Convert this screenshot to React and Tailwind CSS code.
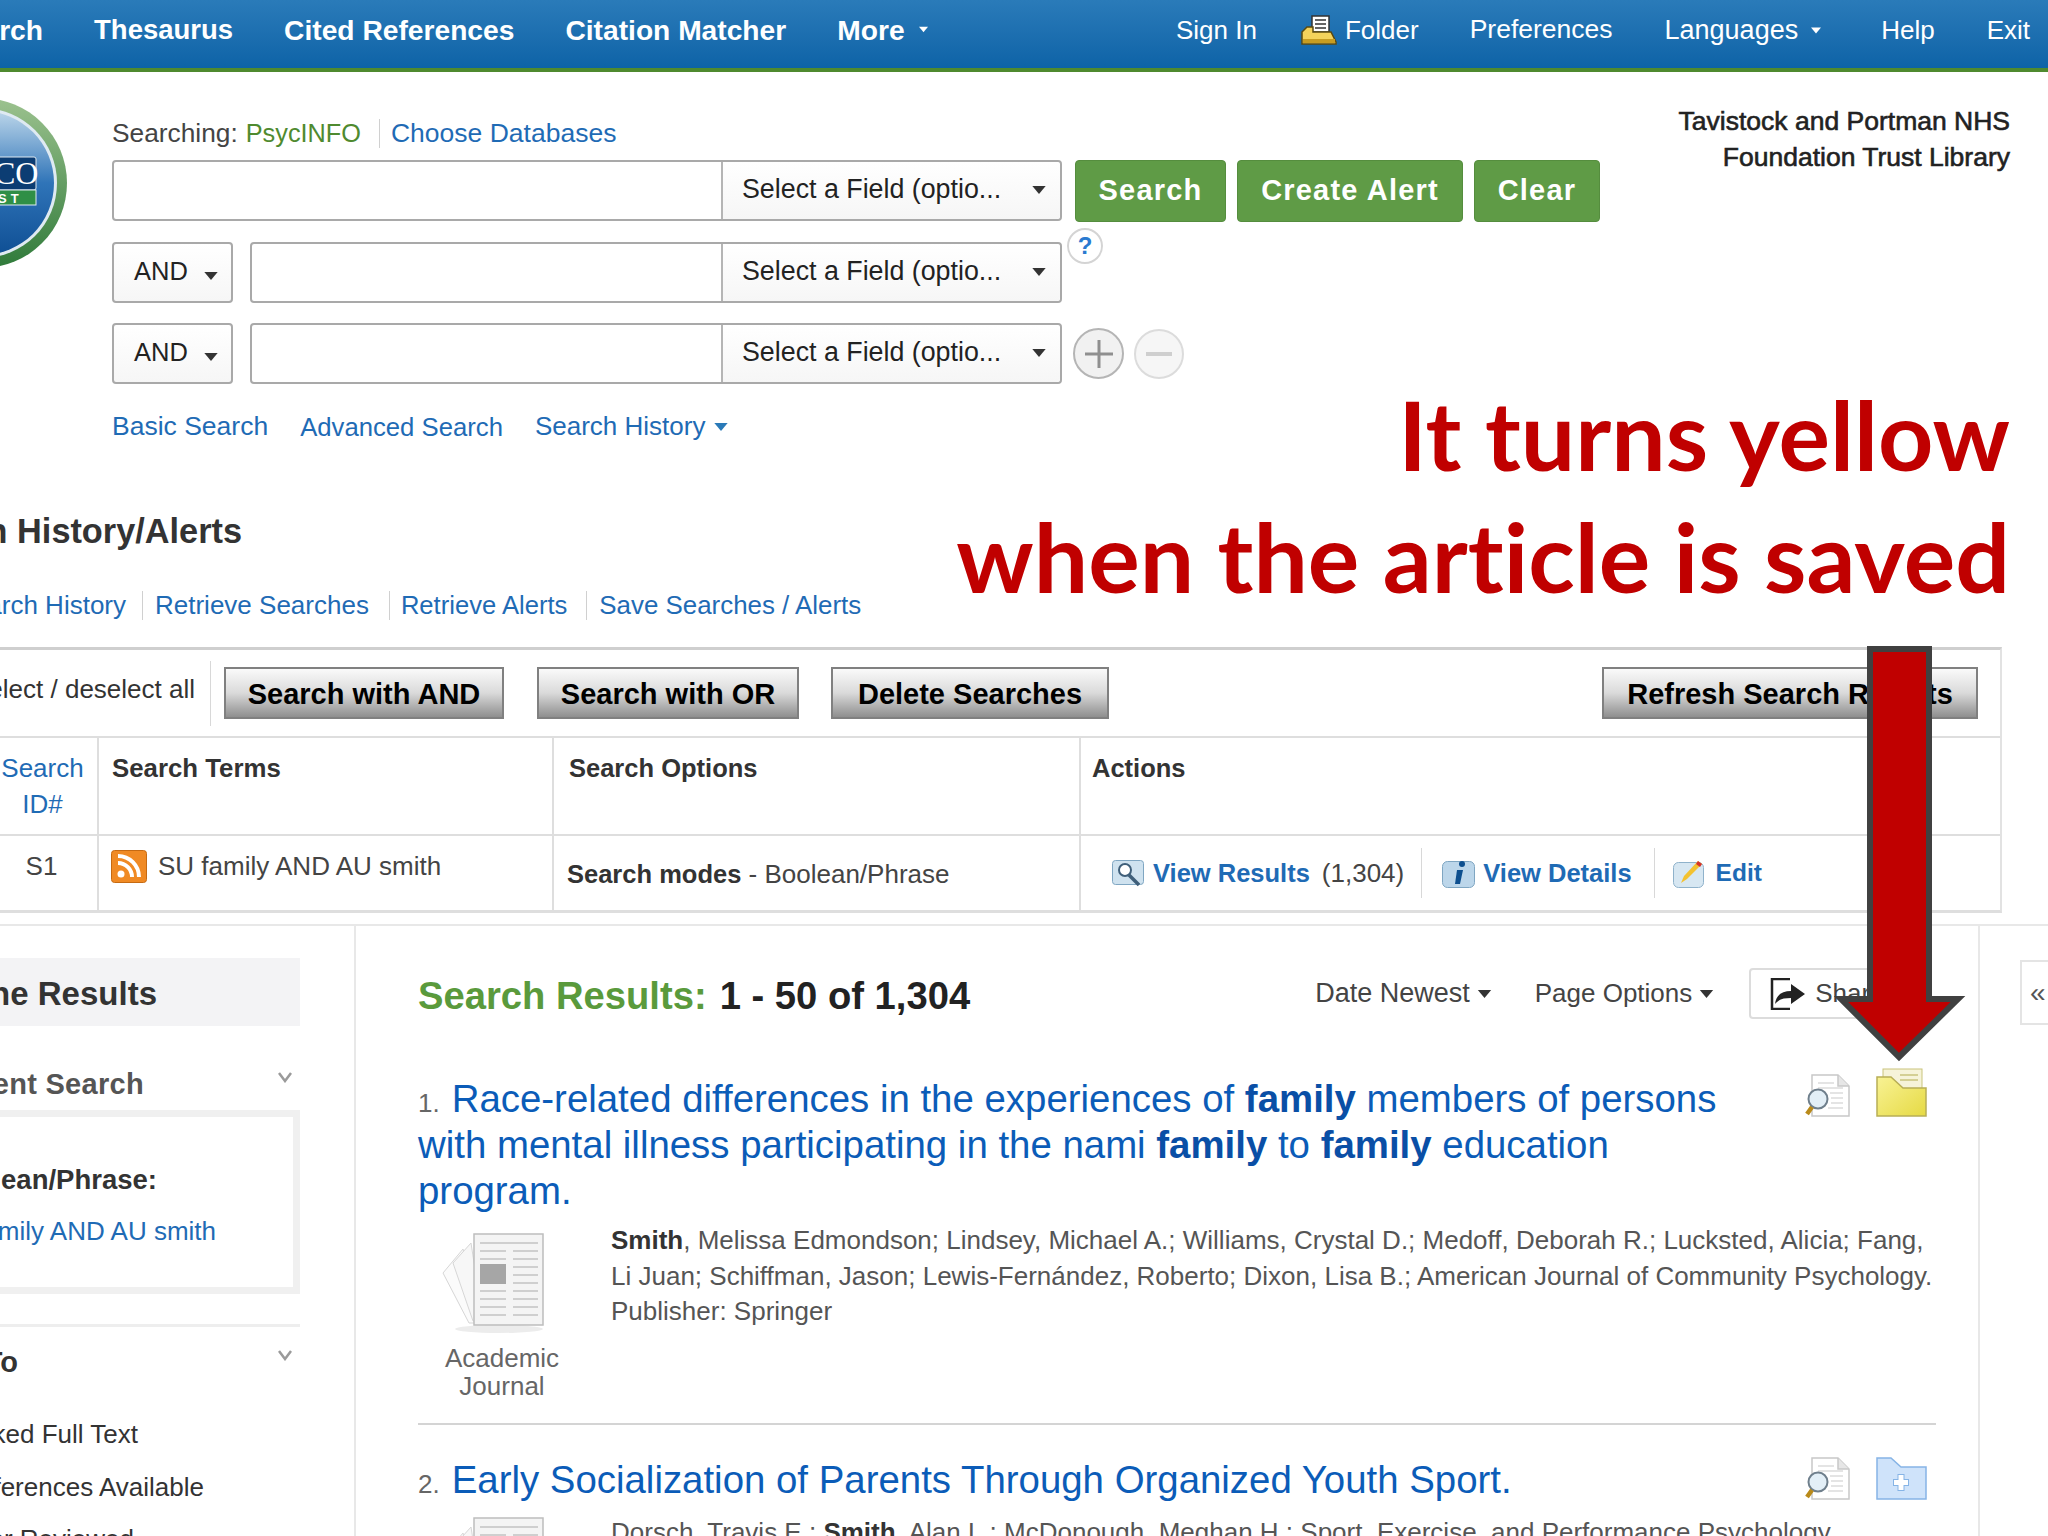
const leftNav = [
  { label: 'Thesaurus', size: 'text-[27.5px]' },
  { label: 'Cited References', size: '' },
  { label: 'Citation Matcher', size: '' },
]

function Caret({ className, color = '#333' }) {
  return (
    <svg className={className} viewBox="0 0 10 6">
      <path d="M0 0h10L5 6z" fill={color} />
    </svg>
  )
}

function Logo() {
  return (
    <svg width="67" height="170" viewBox="0 0 67 170" className="shrink-0">
      <defs>
        <linearGradient id="ring" x1="0" y1="0" x2="0" y2="1">
          <stop offset="0" stopColor="#9cc28f" />
          <stop offset="1" stopColor="#2f7a3a" />
        </linearGradient>
        <linearGradient id="globe" x1="0" y1="0" x2="0" y2="1">
          <stop offset="0" stopColor="#bcd6ea" />
          <stop offset="0.5" stopColor="#2f74b8" />
          <stop offset="1" stopColor="#0f4f94" />
        </linearGradient>
      </defs>
      <circle cx="-18" cy="85" r="85" fill="url(#ring)" />
      <circle cx="-18" cy="85" r="75" fill="#dfeaf2" />
      <circle cx="-18" cy="85" r="72" fill="url(#globe)" />
      <rect x="-20" y="59" width="56" height="33" rx="2" fill="#0c3d73" stroke="#dfeaf2" />
      <text x="-6" y="86" fontSize="32" fill="#fff" fontFamily="Liberation Serif, serif">CO</text>
      <rect x="-20" y="92" width="56" height="15" fill="#2f8f46" stroke="#dfeaf2" />
      <text x="-2" y="105" fontSize="13" fontWeight="700" fill="#fff" letterSpacing="4" fontFamily="Liberation Sans, sans-serif">ST</text>
    </svg>
  )
}

function FolderNavIcon() {
  return (
    <svg width="36" height="30" viewBox="0 0 36 30" className="shrink-0">
      <rect x="11" y="1" width="17" height="16" fill="#fff" stroke="#333" strokeWidth="1.5" />
      <path d="M14 5h11M14 9h11M14 13h11" stroke="#333" strokeWidth="1.5" />
      <path d="M1 17l5-5h6v5h18l5 10v2H1z" fill="#f4d35c" stroke="#5a4a10" strokeWidth="1.5" />
      <path d="M2 24h32v4H2z" fill="#c79d22" />
    </svg>
  )
}

function RssIcon() {
  return (
    <svg width="36" height="34" viewBox="0 0 36 34" className="shrink-0">
      <rect x="0.5" y="0.5" width="35" height="32" rx="3" fill="#f08a24" stroke="#c66a12" />
      <circle cx="10" cy="24" r="3.5" fill="#fff" />
      <path d="M7 13a14 14 0 0 1 14 14M7 6a21 21 0 0 1 21 21" fill="none" stroke="#fff" strokeWidth="4" />
    </svg>
  )
}

function ResultsIcon() {
  return (
    <svg width="32" height="27" viewBox="0 0 32 27" className="shrink-0">
      <rect x="0.5" y="0.5" width="31" height="24" rx="3" fill="#cfe2ef" stroke="#7fa6c2" />
      <circle cx="13" cy="10" r="6" fill="#fff" stroke="#3f5f7a" strokeWidth="2" />
      <path d="M17 15l10 10" stroke="#3f5f7a" strokeWidth="3.5" />
    </svg>
  )
}

function InfoIcon() {
  return (
    <svg width="33" height="29" viewBox="0 0 33 29" className="shrink-0">
      <rect x="0.5" y="2.5" width="32" height="26" rx="5" fill="#bcd6ea" stroke="#7fa6c2" />
      <path d="M15 11h6l-3 14h-5z" fill="#0d4f8f" />
      <circle cx="20" cy="5" r="3" fill="#0d4f8f" />
    </svg>
  )
}

function EditIcon() {
  return (
    <svg width="33" height="29" viewBox="0 0 33 29" className="shrink-0">
      <rect x="0.5" y="3.5" width="30" height="25" rx="5" fill="#d7e7f2" stroke="#8fb2cb" />
      <path d="M8 24l3-7L25 2l4 3-15 15z" fill="#f3c230" />
      <path d="M25 2l4 3-2 3-4-3z" fill="#d6322c" />
    </svg>
  )
}

function PreviewIcon() {
  return (
    <svg width="46" height="43" viewBox="0 0 46 43" className="shrink-0">
      <path d="M8 1h26l11 11v30H8z" fill="#fff" stroke="#c8c8c8" strokeWidth="1.5" />
      <path d="M34 1v11h11" fill="#e6e6e6" stroke="#c8c8c8" strokeWidth="1.5" />
      <path d="M14 9h16M14 14h25M26 19h13M27 24h12M27 29h12M24 34h15" stroke="#dcdcdc" strokeWidth="1.5" />
      <circle cx="14" cy="25" r="9.500" fill="#e3eff7" stroke="#6f7f8c" strokeWidth="2" />
      <path d="M8 33l-5 7" stroke="#b98a1a" strokeWidth="4.500" />
    </svg>
  )
}

function SavedFolderIcon() {
  return (
    <svg width="51" height="49" viewBox="0 0 51 49" className="shrink-0">
      <defs>
        <linearGradient id="savedFolder" x1="0" y1="0" x2="1" y2="1">
          <stop offset="0" stopColor="#f8f294" />
          <stop offset="1" stopColor="#e6da44" />
        </linearGradient>
      </defs>
      <rect x="7" y="1" width="39" height="30" fill="#f6f3d9" stroke="#c9c47d" />
      <path d="M24 7h18M24 12h18" stroke="#c9c47d" strokeWidth="1.5" />
      <path d="M1 9h14l12 11h23v28H1z" fill="url(#savedFolder)" stroke="#b8ae55" strokeWidth="1.5" />
    </svg>
  )
}

function AddFolderIcon() {
  return (
    <svg width="51" height="43" viewBox="0 0 51 43" className="shrink-0">
      <path d="M1 1h14l10 9h25v32H1z" fill="#cfe3fa" stroke="#86b4e6" strokeWidth="1.5" />
      <path d="M25 17v17M17 25.500h16" stroke="#86b4e6" strokeWidth="7" />
      <path d="M25 18v15M18 25.500h14" stroke="#fff" strokeWidth="5" />
    </svg>
  )
}

function JournalIcon() {
  return (
    <svg width="104" height="105" viewBox="0 0 104 105" className="shrink-0">
      <ellipse cx="58" cy="96" rx="44" ry="4" fill="#ececec" />
      <path d="M22 16L2 40l26 50h12z" fill="#fbfbfb" stroke="#d6d6d6" />
      <path d="M30 10L12 30l20 58h10z" fill="#f7f7f7" stroke="#d6d6d6" />
      <rect x="33" y="1" width="69" height="91" fill="#f4f4f4" stroke="#bdbdbd" strokeWidth="1.5" />
      <path d="M39 10h58M39 18h26M39 26h26M72 18h25M72 26h25M72 34h25M72 42h25M72 50h25M72 58h25M72 66h25M72 74h25M72 82h25M39 58h26M39 66h26M39 74h26M39 82h26" stroke="#cfcfcf" strokeWidth="2" />
      <rect x="39" y="31" width="26" height="20" fill="#a6a6a6" />
    </svg>
  )
}

function ShareIcon() {
  return (
    <svg width="36" height="32" viewBox="0 0 36 32" className="shrink-0">
      <path d="M20 1H2v30h18" fill="none" stroke="#222" strokeWidth="2.500" />
      <path d="M5 26c1-9 7-13 16-13V6l14 10-14 10v-6c-7 0-12 1-16 6z" fill="#222" />
    </svg>
  )
}

function Clipped({ width, className, children }) {
  return (
    <div className={`flex justify-end whitespace-nowrap ${width} ${className || ''}`}>
      <span className="shrink-0">{children}</span>
    </div>
  )
}

function Header() {
  return (
    <div className="h-[72px] shrink-0 flex items-center justify-between border-b-4 border-[#4f8a2f] bg-gradient-to-b from-[#2a7bb9] to-[#0d63a7] text-white pb-[8px]">
      <div className="flex items-center gap-[51px] font-bold text-[28.2px] whitespace-nowrap">
        <span className="ml-[-51px]">Search</span>
        {leftNav.map((item) => (
          <span key={item.label} className={item.size}>{item.label}</span>
        ))}
        <span className="flex items-center gap-[14px]">
          More
          <Caret className="w-[9px] h-[7px]" color="#fff" />
        </span>
      </div>
      <div className="flex items-center text-[26px] whitespace-nowrap pr-[18px]">
        <span>Sign In</span>
        <span className="flex items-center gap-[8px] ml-[44px]">
          <FolderNavIcon />
          Folder
        </span>
        <span className="ml-[51px] text-[26.5px]">Preferences</span>
        <span className="flex items-center gap-[13px] ml-[52px] text-[27px]">
          Languages
          <Caret className="w-[10px] h-[7px]" color="#fff" />
        </span>
        <span className="ml-[60px]">Help</span>
        <span className="ml-[52px]">Exit</span>
      </div>
    </div>
  )
}

function FieldBox({ className }) {
  return (
    <div className={`h-[61px] flex border-2 border-[#a9a9a9] rounded-[4px] bg-white ${className}`}>
      <div className="flex-1" />
      <div className="w-[339px] shrink-0 flex items-center border-l-2 border-[#b5b5b5] pl-[19px] pr-[13px] pb-[2px] bg-gradient-to-b from-white to-[#f6f6f6] rounded-r-[4px]">
        <span className="flex-1 text-[26.8px] text-[#222] whitespace-nowrap">Select a Field (optio...</span>
        <Caret className="w-[16px] h-[8px]" />
      </div>
    </div>
  )
}

function BoolSelect() {
  return (
    <div className="w-[121px] h-[61px] shrink-0 flex items-center border-2 border-[#a9a9a9] rounded-[4px] bg-gradient-to-b from-white to-[#f6f6f6] pl-[20px] pb-[3px] text-[25.5px] text-[#222]">
      AND
      <Caret className="w-[16px] h-[8px] ml-[15px] mt-[9px]" />
    </div>
  )
}

function SearchButton({ width, children }) {
  return (
    <button className={`${width} h-[62px] shrink-0 rounded-[4px] bg-[#5f9b46] border border-[#558d3e] text-white font-bold text-[29px] tracking-[1.2px]`}>
      {children}
    </button>
  )
}

function SearchForm() {
  return (
    <div className="flex h-[442px] shrink-0">
      <div className="mt-[26px]">
        <Logo />
      </div>
      <div className="ml-[45px] w-[1490px] shrink-0">
        <div className="mt-[47px] h-[29px] flex items-center text-[26px] whitespace-nowrap">
          <span className="text-[#444] text-[26.3px]">Searching:</span>
          <span className="ml-[8px] text-[#4f8a2f] text-[25.3px]">PsycINFO</span>
          <span className="ml-[18px] w-px h-[29px] bg-[#d0d0d0]" />
          <span className="ml-[11px] text-[#1f6bb5] text-[26.5px]">Choose Databases</span>
        </div>
        <div className="mt-[12px] flex flex-col gap-[20px]">
          <div className="flex items-start">
            <FieldBox className="w-[950px]" />
            <div className="flex gap-[11px] ml-[13px]">
              <SearchButton width="w-[151px]">Search</SearchButton>
              <SearchButton width="w-[226px]">Create Alert</SearchButton>
              <SearchButton width="w-[126px]">Clear</SearchButton>
            </div>
          </div>
          <div className="flex items-start">
            <BoolSelect />
            <FieldBox className="w-[812px] ml-[17px]" />
            <div className="w-[36px] h-[36px] ml-[5px] mt-[-14px] rounded-full border-2 border-[#d4d4d4] bg-white flex items-center justify-center text-[#2a7ad0] font-bold text-[24px]">
              ?
            </div>
          </div>
          <div className="flex items-center">
            <BoolSelect />
            <FieldBox className="w-[812px] ml-[17px]" />
            <div className="w-[51px] h-[51px] ml-[11px] rounded-full border-2 border-[#b5b5b5] bg-[#f1f1f1] flex items-center justify-center">
              <svg width="28" height="28" viewBox="0 0 28 28">
                <path d="M14 0v28M0 14h28" stroke="#8f8f8f" strokeWidth="3" />
              </svg>
            </div>
            <div className="w-[50px] h-[50px] ml-[10px] rounded-full border-2 border-[#dcdcdc] bg-[#f6f6f6] flex items-center justify-center">
              <svg width="26" height="4" viewBox="0 0 26 4">
                <path d="M0 2h26" stroke="#cfcfcf" strokeWidth="4" />
              </svg>
            </div>
          </div>
        </div>
        <div className="mt-[23px] flex items-center text-[26px] text-[#1f6bb5] whitespace-nowrap">
          <span className="text-[26.5px]">Basic Search</span>
          <span className="ml-[32px] text-[25.7px]">Advanced Search</span>
          <span className="ml-[32px]">Search History</span>
          <Caret className="w-[16px] h-[8px] ml-[8px]" color="#2a7ab8" />
        </div>
      </div>
      <div className="flex-1 mt-[31px] text-right pr-[38px] text-[26.500px] leading-[36px] text-[#222] whitespace-nowrap [-webkit-text-stroke:0.6px_#222]">
        <div>Tavistock and Portman NHS</div>
        <div>Foundation Trust Library</div>
      </div>
    </div>
  )
}

function ToolButton({ width, children }) {
  return (
    <button className={`${width} h-[52px] shrink-0 pt-[3px] border-2 border-[#808080] bg-gradient-to-b from-[#fafafa] via-[#dadada] to-[#8f8f8f] text-black font-bold text-[29px] whitespace-nowrap`}>
      {children}
    </button>
  )
}

function HistoryPanel() {
  return (
    <div>
      <Clipped width="w-[242px]" className="h-[40px] items-center font-bold text-[34.3px] text-[#333] -mt-[2px]">
        Search History/Alerts
      </Clipped>
      <div className="mt-[39px] h-[29px] flex items-center text-[26px] text-[#1f6bb5] whitespace-nowrap">
        <Clipped width="w-[126px]">Print Search History</Clipped>
        <span className="ml-[16px] w-px h-[29px] bg-[#d0d0d0]" />
        <span className="ml-[12px]">Retrieve Searches</span>
        <span className="ml-[20px] w-px h-[29px] bg-[#d0d0d0]" />
        <span className="ml-[11px] text-[25.6px]">Retrieve Alerts</span>
        <span className="ml-[19px] w-px h-[29px] bg-[#d0d0d0]" />
        <span className="ml-[12px] text-[25.9px]">Save Searches / Alerts</span>
      </div>
      <div className="mt-[27px] w-[2002px] border-t-[3px] border-r-2 border-b-[3px] border-t-[#cfcfcf] border-r-[#e2e2e2] border-b-[#dedede]">
        <div className="h-[88px] flex items-center border-b-2 border-[#dedede]">
          <Clipped width="w-[195px]" className="text-[26px] text-[#333] -mt-[7px]">Select / deselect all</Clipped>
          <div className="ml-[15px] w-px h-[65px] bg-[#d8d8d8]" />
          <div className="ml-[13px] flex items-center">
            <ToolButton width="w-[280px]">Search with AND</ToolButton>
            <div className="ml-[33px]">
              <ToolButton width="w-[262px]">Search with OR</ToolButton>
            </div>
            <div className="ml-[32px]">
              <ToolButton width="w-[278px]">Delete Searches</ToolButton>
            </div>
          </div>
          <div className="ml-auto mr-[22px]">
            <ToolButton width="w-[376px]">Refresh Search Results</ToolButton>
          </div>
        </div>
        <div className="grid grid-cols-[99px_455px_527px_1fr] h-[98px] border-b-2 border-[#dedede] text-[25.8px] leading-[36px] font-bold text-[#333]">
          <div className="border-r-2 border-[#dedede] pt-[12px] pr-[12px] text-center font-normal text-[#1f6bb5] text-[26px]">
            Search
            <br />
            ID#
          </div>
          <div className="border-r-2 border-[#dedede] pt-[12px] pl-[13px]">Search Terms</div>
          <div className="border-r-2 border-[#dedede] pt-[12px] pl-[15px] text-[25.500px]">Search Options</div>
          <div className="pt-[12px] pl-[11px] text-[25.500px]">Actions</div>
        </div>
        <div className="grid grid-cols-[99px_455px_527px_1fr] h-[74px] text-[26px] text-[#444]">
          <div className="border-r-2 border-[#dedede] pt-[12px] pr-[14px] text-center leading-[36px]">S1</div>
          <div className="border-r-2 border-[#dedede] pt-[14px] pl-[12px] flex items-start leading-[32px]">
            <RssIcon />
            <span className="ml-[11px]">SU family AND AU smith</span>
          </div>
          <div className="border-r-2 border-[#dedede] pl-[13px] pt-[20px] leading-[36px] whitespace-nowrap">
            <span className="font-bold text-[25.500px] text-[#333]">Search modes</span> - Boolean/Phrase
          </div>
          <div className="flex items-center pl-[31px] whitespace-nowrap">
            <ResultsIcon />
            <span className="ml-[9px] font-bold text-[25.500px] text-[#1f6bb5]">View Results</span>
            <span className="ml-[12px]">(1,304)</span>
            <span className="ml-[17px] w-px h-[50px] bg-[#d8d8d8]" />
            <span className="ml-[20px]"><InfoIcon /></span>
            <span className="ml-[8px] font-bold text-[25.500px] text-[#1f6bb5]">View Details</span>
            <span className="ml-[22px] w-px h-[50px] bg-[#d8d8d8]" />
            <span className="ml-[18px]"><EditIcon /></span>
            <span className="ml-[10px] font-bold text-[24.500px] text-[#1f6bb5]">Edit</span>
          </div>
        </div>
      </div>
    </div>
  )
}

function Chevron() {
  return (
    <svg width="14" height="11" viewBox="0 0 14 11">
      <path d="M1 1l6 8 6-8" fill="none" stroke="#9a9a9a" strokeWidth="2.500" />
    </svg>
  )
}

function Sidebar() {
  return (
    <div className="w-[356px] shrink-0 border-r-2 border-[#e8e8e8]">
      <div className="w-[300px] mt-[32px] h-[68px] bg-[#f3f3f5] flex items-center pt-[3px]">
        <Clipped width="w-[157px]" className="font-bold text-[33px] text-[#333]">Refine Results</Clipped>
      </div>
      <div className="w-[300px] mt-[45px] h-[28px] flex items-center justify-between pr-[8px]">
        <Clipped width="w-[144px]" className="font-bold text-[29px] text-[#555] tracking-[0.3px]">Current Search</Clipped>
        <span className="-mt-[16px]"><Chevron /></span>
      </div>
      <div className="w-[300px] mt-[11px] h-[184px] border-[7px] border-l-0 border-[#f0f0f0]">
        <Clipped width="w-[157px]" className="mt-[42px] font-bold text-[27.5px] text-[#333]">Boolean/Phrase:</Clipped>
        <Clipped width="w-[216px]" className="mt-[12px] text-[26px] text-[#1f6bb5]">SU family AND AU smith</Clipped>
      </div>
      <div className="w-[300px] mt-[30px] h-[3px] bg-[#eeeeee]" />
      <div className="w-[300px] mt-[22px] h-[28px] flex items-center justify-between pr-[8px]">
        <Clipped width="w-[18px]" className="font-bold text-[29px] text-[#333]">Limit To</Clipped>
        <span className="-mt-[16px]"><Chevron /></span>
      </div>
      <Clipped width="w-[138px]" className="mt-[42px] text-[26px] leading-[30px] text-[#333]">Linked Full Text</Clipped>
      <Clipped width="w-[204px]" className="mt-[23px] text-[26px] leading-[30px] text-[#333]">References Available</Clipped>
      <Clipped width="w-[134px]" className="mt-[22px] text-[26px] leading-[30px] text-[#333]">Peer Reviewed</Clipped>
    </div>
  )
}

function ResultItem({ top, lines, folder, children }) {
  return (
    <div>
      <div className="flex items-start">
        <div className={`w-[1386px] shrink-0 ${top} text-[38.4px] leading-[46px] text-[#0b5cb8] whitespace-nowrap`}>
          {lines}
        </div>
        <div className="flex items-end gap-[26px]">
          <PreviewIcon />
          {folder}
        </div>
      </div>
      {children}
    </div>
  )
}

function Bold({ children }) {
  return <b className="font-bold text-[#0a4fa6]">{children}</b>
}

function ItemNumber({ children }) {
  return <span className="text-[26px] leading-none text-[#666] mr-[12px]">{children}</span>
}

function Results() {
  return (
    <div className="w-[1624px] shrink-0 border-r-2 border-[#e8e8e8] pl-[62px]">
      <div className="mt-[42px] h-[51px] flex items-center whitespace-nowrap">
        <div className="font-bold text-[38.2px] text-[#222] leading-none pt-[5px]">
          <span className="text-[#5a9a3c]">Search Results:</span>
          <span className="ml-[13px]">1 - 50 of 1,304</span>
        </div>
        <div className="ml-[345px] flex items-center text-[27px] text-[#444]">
          Date Newest
          <Caret className="w-[15px] h-[8px] ml-[7px]" />
        </div>
        <div className="ml-[43px] flex items-center text-[26px] text-[#444]">
          Page Options
          <Caret className="w-[15px] h-[8px] ml-[7px]" />
        </div>
        <div className="ml-[35px] h-[51px] w-[150px] flex items-center border-2 border-[#dcdcdc] rounded-[4px] pl-[19px] text-[26px] text-[#444]">
          <ShareIcon />
          <span className="ml-[9px]">Share</span>
        </div>
      </div>
      <div className="mt-[49px]">
        <ResultItem
          top="pt-[8px]"
          folder={<SavedFolderIcon />}
          lines={
            <>
              <div>
                <ItemNumber>1.</ItemNumber>Race-related differences in the experiences of <Bold>family</Bold> members of persons
              </div>
              <div>
                with mental illness participating in the nami <Bold>family</Bold> to <Bold>family</Bold> education
              </div>
              <div>program.</div>
            </>
          }
        >
          <div className="flex mt-[-1px]">
            <div className="w-[168px] shrink-0 flex flex-col items-center text-[26px] leading-[28px] text-[#666] pt-[20px]">
              <span className="mr-[18px]"><JournalIcon /></span>
              <span className="mt-[6px]">Academic</span>
              <span>Journal</span>
            </div>
            <div className="ml-[25px] pt-[10px] text-[26px] leading-[35.500px] text-[#555] whitespace-nowrap">
              <div>
                <b className="text-[#333]">Smith</b>, Melissa Edmondson; Lindsey, Michael A.; Williams, Crystal D.; Medoff, Deborah R.; Lucksted, Alicia; Fang,
              </div>
              <div>Li Juan; Schiffman, Jason; Lewis-Fernández, Roberto; Dixon, Lisa B.; American Journal of Community Psychology.</div>
              <div>Publisher: Springer</div>
            </div>
          </div>
        </ResultItem>
        <div className="w-[1518px] h-[2px] bg-[#d4d4d4] mt-[23px] mb-[32px]" />
        <ResultItem
          top="pt-0"
          folder={<AddFolderIcon />}
          lines={
            <div>
              <ItemNumber>2.</ItemNumber>Early Socialization of Parents Through Organized Youth Sport.
            </div>
          }
        >
          <div className="flex mt-[12px]">
            <div className="w-[168px] shrink-0 flex flex-col items-center pt-[2px]">
              <span className="mr-[18px]"><JournalIcon /></span>
            </div>
            <div className="ml-[25px] text-[26px] leading-[35.500px] text-[#555] whitespace-nowrap">
              Dorsch, Travis E.; <b className="text-[#333]">Smith</b>, Alan L.; McDonough, Meghan H.; Sport, Exercise, and Performance Psychology.
            </div>
          </div>
        </ResultItem>
      </div>
    </div>
  )
}

function RedArrow() {
  return (
    <svg width="140" height="424" viewBox="0 0 140 424" className="absolute left-[1830px] top-[642px]">
      <path d="M40 7h59v350h29L69 415 11 357h29z" fill="#c00000" stroke="#404040" strokeWidth="6" />
    </svg>
  )
}

export default function App() {
  return (
    <div className="relative w-[2048px] h-[1536px] overflow-hidden bg-white flex flex-col [font-family:'Liberation_Sans',Arial,sans-serif]">
      <Header />
      <SearchForm />
      <HistoryPanel />
      <div className="mt-[11px] flex-1 flex border-t-2 border-[#e8e8e8] min-h-0">
        <Sidebar />
        <Results />
        <div className="flex-1 pt-[34px]">
          <div className="ml-[40px] h-[65px] border-2 border-r-0 border-[#e4e4e4] flex items-center pl-[8px] text-[28px] text-[#555]">
            «
          </div>
        </div>
      </div>
      <RedArrow />
      <div className="absolute right-[38px] top-[373px] text-right font-bold text-[#c00000] text-[96.5px] leading-[122px] whitespace-nowrap [font-family:Lato,sans-serif] [font-variant-ligatures:none]">
        <div>It turns yellow</div>
        <div>when the article is saved</div>
      </div>
    </div>
  )
}
